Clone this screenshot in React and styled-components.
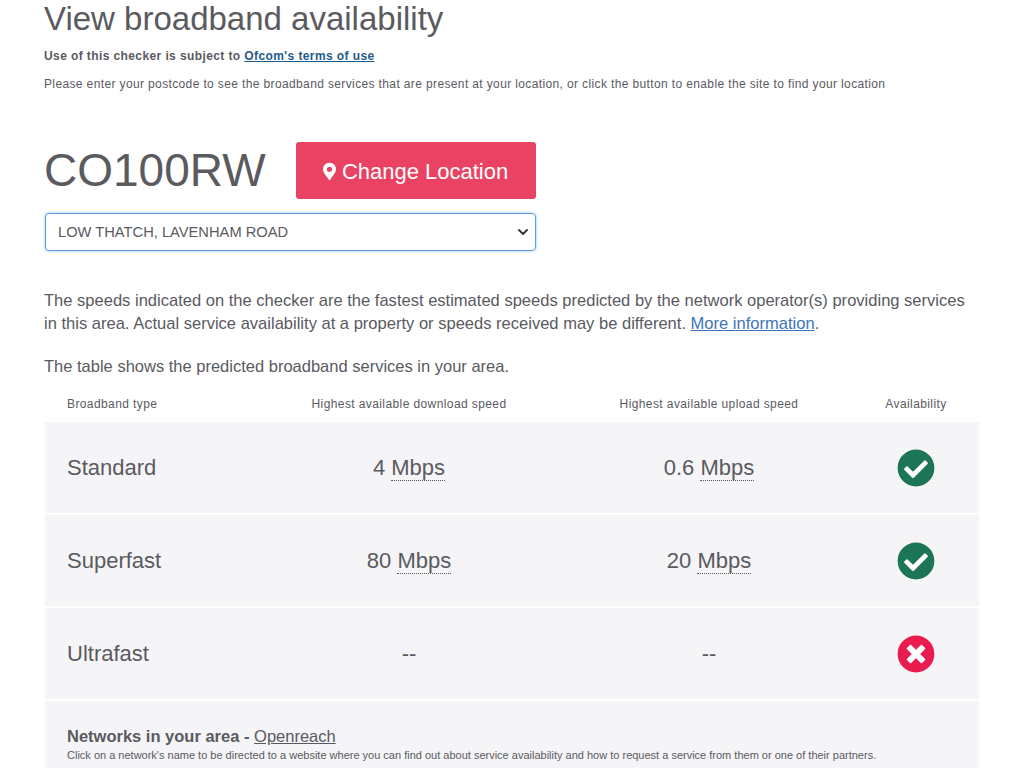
import React from 'react';
import styled, { createGlobalStyle } from 'styled-components';
import { FaCheckCircle, FaTimesCircle, FaMapMarkerAlt } from 'react-icons/fa';

const GlobalStyle = createGlobalStyle`
    html, body {
        margin: 0;
        height: 768px;
        overflow: hidden;
        background: #fff;
        color: #5a5a5f;
        font-family: "Liberation Sans", Arial, sans-serif;
    }
`;

const Page = styled.main`
    padding: 0 45px 0 44px;
`;

const Title = styled.h1`
    margin: 0;
    height: 37px;
    font-size: 33px;
    line-height: 37px;
    font-weight: 400;
`;

const Terms = styled.p`
    margin: 12px 0 0;
    font-size: 12px;
    line-height: 14px;
    font-weight: 700;
    letter-spacing: 0.4px;

    a {
        color: #1f5a8c;
    }
`;

const Intro = styled.p`
    margin: 14px 0 0;
    font-size: 12px;
    line-height: 14px;
    letter-spacing: 0.37px;
`;

const LocationRow = styled.div`
    display: flex;
    align-items: center;
    gap: 30px;
    margin-top: 51px;
`;

const Postcode = styled.div`
    font-size: 46px;
    line-height: 57px;
`;

const ChangeButton = styled.button`
    display: flex;
    align-items: center;
    justify-content: center;
    gap: 6px;
    width: 240px;
    height: 57px;
    padding: 2px 0 0;
    border: 0;
    border-radius: 3px;
    background: #ea4262;
    color: #fff;
    font-family: inherit;
    font-size: 22px;

    svg {
        width: 13px;
        height: 19px;
    }
`;

const AddressSelect = styled.div`
    display: flex;
    align-items: center;
    justify-content: space-between;
    box-sizing: border-box;
    width: 491px;
    height: 38px;
    margin: 14px 0 0 1px;
    padding: 0 6px 0 12px;
    border: 1px solid #5b9ddd;
    border-radius: 4px;
    box-shadow: 0 0 3px rgba(70, 140, 220, 0.6);
    font-size: 14.7px;
`;

const Notice = styled.p`
    margin: 38px 0 0;
    font-size: 16.54px;
    line-height: 23px;

    a {
        color: #3c75b8;
    }
`;

const Summary = styled.p`
    margin: 20px 0 0;
    font-size: 16.5px;
    line-height: 23px;
`;

const SpeedTable = styled.section`
    margin: 8px 0 0 1px;
    width: 934px;
`;

const HeaderRow = styled.div`
    display: grid;
    grid-template-columns: 208px 312px 288px 126px;
    align-items: center;
    height: 36px;
    font-size: 12px;
    letter-spacing: 0.4px;
    text-align: center;
`;

const ServiceRow = styled(HeaderRow)`
    height: 91px;
    margin-bottom: 2px;
    background: #f5f4f7;
    font-size: 22px;
    letter-spacing: 0;
`;

const TypeCell = styled.div`
    padding-left: 22px;
    text-align: left;
`;

const Unit = styled.abbr`
    text-decoration: none;
    border-bottom: 1px dotted #5a5a5f;
`;

const StatusCell = styled.div`
    display: flex;
    justify-content: center;
    font-size: 38px;
    color: ${({ $ok }) => ($ok ? '#1c7554' : '#ea1c4f')};

    svg {
        background: radial-gradient(circle, #fff 55%, transparent 57%);
        border-radius: 50%;
    }
`;

const Networks = styled.div`
    padding: 26px 22px 0;
    height: 80px;
    background: #f5f4f7;
`;

const NetworksTitle = styled.div`
    font-size: 16.5px;
    line-height: 18px;

    strong {
        font-weight: 700;
    }

    a {
        color: inherit;
    }
`;

const NetworksHint = styled.div`
    margin-top: 4px;
    font-size: 11px;
    line-height: 13px;
`;

const services = [
    { name: 'Standard', down: '4', up: '0.6', ok: true },
    { name: 'Superfast', down: '80', up: '20', ok: true },
    { name: 'Ultrafast', ok: false },
];

function Speed({ value }) {
    if (!value) return <div>--</div>;
    return <div>{value} <Unit title="Megabits per second">Mbps</Unit></div>;
}

export default function App() {
    return (
        <Page>
            <GlobalStyle />
            <Title>View broadband availability</Title>
            <Terms>Use of this checker is subject to <a href="#terms">Ofcom's terms of use</a></Terms>
            <Intro>Please enter your postcode to see the broadband services that are present at your location, or click the button to enable the site to find your location</Intro>
            <LocationRow>
                <Postcode>CO100RW</Postcode>
                <ChangeButton><FaMapMarkerAlt />Change Location</ChangeButton>
            </LocationRow>
            <AddressSelect>
                LOW THATCH, LAVENHAM ROAD
                <svg width="12" height="8" viewBox="0 0 12 8" fill="none" stroke="#343a40" strokeWidth="2" strokeLinecap="round" strokeLinejoin="round">
                    <path d="M2 2l4 4 4-4" />
                </svg>
            </AddressSelect>
            <Notice>
                The speeds indicated on the checker are the fastest estimated speeds predicted by the network operator(s) providing services in this area. Actual service availability at a property or speeds received may be different. <a href="#info">More information</a>.
            </Notice>
            <Summary>The table shows the predicted broadband services in your area.</Summary>
            <SpeedTable>
                <HeaderRow>
                    <TypeCell>Broadband type</TypeCell>
                    <div>Highest available download speed</div>
                    <div>Highest available upload speed</div>
                    <div>Availability</div>
                </HeaderRow>
                {services.map(service => (
                    <ServiceRow key={service.name}>
                        <TypeCell>{service.name}</TypeCell>
                        <Speed value={service.down} />
                        <Speed value={service.up} />
                        <StatusCell $ok={service.ok}>
                            {service.ok ? <FaCheckCircle /> : <FaTimesCircle />}
                        </StatusCell>
                    </ServiceRow>
                ))}
                <Networks>
                    <NetworksTitle><strong>Networks in your area - </strong><a href="#openreach">Openreach</a></NetworksTitle>
                    <NetworksHint>Click on a network's name to be directed to a website where you can find out about service availability and how to request a service from them or one of their partners.</NetworksHint>
                </Networks>
            </SpeedTable>
        </Page>
    );
}
